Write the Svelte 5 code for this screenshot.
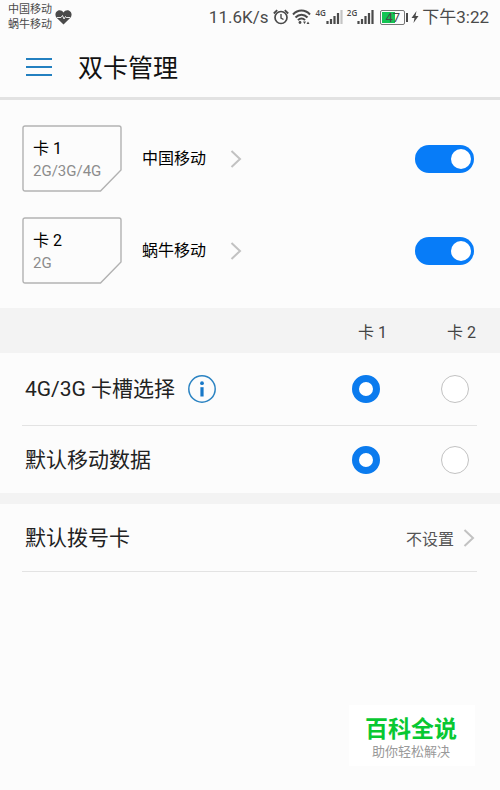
<script lang="ts">
  let sims = $state([
    { id: 1, name: '卡 1', network: '2G/3G/4G', carrier: '中国移动', enabled: true },
    { id: 2, name: '卡 2', network: '2G', carrier: '蜗牛移动', enabled: true },
  ]);

  let slotSim = $state(1);
  let dataSim = $state(1);
</script>

{#snippet chevron()}
  <svg class="chevron" viewBox="0 0 12 20" aria-hidden="true">
    <path d="M1.5 2 10 10 1.5 18" fill="none" stroke="#c2c2c2" stroke-width="2" />
  </svg>
{/snippet}

{#snippet signal(label: string, faded: boolean)}
  <span class="signal">
    <span class="signal-label">{label}</span>
    <svg width="17" height="16" viewBox="0 0 17 16" aria-hidden="true">
      <path d="M1.5 12v3M5 10v5M8.5 7v8M12 4v11" stroke="#4a4a4a" stroke-width="2.2" />
      <path d="M15.5 1v14" stroke={faded ? '#c4c4c4' : '#4a4a4a'} stroke-width="2.2" />
    </svg>
  </span>
{/snippet}

<div class="page">
  <div class="status">
    <div class="carriers">
      <span>中国移动</span>
      <span>蜗牛移动</span>
    </div>
    <svg class="heart" width="17" height="15" viewBox="0 0 17 15" aria-hidden="true">
      <path d="M8.5 14.5 1.6 7.8C-.4 5.4.2 1.8 2.8.7 5-.2 7.2.6 8.5 2.5 9.8.6 12-.2 14.2.7c2.6 1.1 3.2 4.7 1.2 7.1z" fill="#4a4a4a" />
      <path d="M2 7.5h4l1.5-2L9 9l1.500-2.500.8 1H15" fill="none" stroke="#fcfcfc" stroke-width="0.9" />
    </svg>
    <div class="status-right">
      <span>11.6K/s</span>
      <svg class="alarm" width="16" height="16" viewBox="0 0 16 16" fill="none" stroke="#4a4a4a" aria-hidden="true">
        <circle cx="8" cy="8.5" r="6" stroke-width="1.7" />
        <path d="M8 5v4l2.5 1.5" stroke-width="1.4" />
        <path d="M.8 4.5 4.2 1.2M15.2 4.5 11.8 1.2" stroke-width="1.8" />
      </svg>
      <svg class="wifi" width="19" height="16" viewBox="0 0 19 16" fill="none" stroke="#4a4a4a" aria-hidden="true">
        <path d="M1 5.5C6 .3 13 .3 18 5.5M3.5 8.5c3.5-3.8 8.5-3.8 12 0M6 11.2c2-2.2 5-2.2 7 0" stroke-width="2" />
        <circle cx="8" cy="13.5" r="1.4" fill="#4a4a4a" stroke="none" />
        <path d="m11 12.5 1.5 2.5 1.5-2.5zM14.500 15l1.500-2.500 1.500 2.500z" fill="#4a4a4a" stroke="none" />
      </svg>
      {@render signal('4G', true)}
      {@render signal('2G', false)}
      <span class="battery">47</span>
      <svg class="bolt" width="8" height="12" viewBox="0 0 8 12" aria-hidden="true">
        <path d="M5.5 0 .5 7h3l-1 5 5-7h-3z" fill="#4a4a4a" />
      </svg>
      <span>下午3:22</span>
    </div>
  </div>

  <header>
    <button class="menu" aria-label="菜单">
      <svg width="26" height="20" viewBox="0 0 26 20" aria-hidden="true">
        <path d="M0 2h26M0 10h26M0 18h26" stroke="#2380c0" stroke-width="2" />
      </svg>
    </button>
    <h1>双卡管理</h1>
  </header>

  <section class="sims">
    {#each sims as sim (sim.id)}
      <div class="sim-row">
        <div class="sim-card">
          <svg class="outline" viewBox="0 0 100 67" aria-hidden="true">
            <path d="M3 1h94a2 2 0 0 1 2 2v42L78.5 66H3a2 2 0 0 1-2-2V3a2 2 0 0 1 2-2z" fill="none" stroke="#b2b2b2" stroke-width="1.4" />
          </svg>
          <span class="sim-name">{sim.name}</span>
          <span class="sim-network">{sim.network}</span>
        </div>
        <button class="carrier">
          {sim.carrier}
          {@render chevron()}
        </button>
        <input class="toggle" type="checkbox" aria-label={sim.name} bind:checked={sim.enabled} />
      </div>
    {/each}
  </section>

  <div class="grid columns">
    <span></span>
    <span>卡 1</span>
    <span>卡 2</span>
  </div>

  <div class="grid row slot">
    <div class="label">
      4G/3G 卡槽选择
      <button class="info" aria-label="说明">
        <svg width="28" height="28" viewBox="0 0 28 28" aria-hidden="true">
          <circle cx="14" cy="14" r="13.2" fill="none" stroke="#2b83c2" stroke-width="1.5" />
          <circle cx="14" cy="8.2" r="1.9" fill="#1878c8" />
          <path d="M14 12.2v9.3" stroke="#1878c8" stroke-width="3.2" />
        </svg>
      </button>
    </div>
    {#each sims as sim (sim.id)}
      <input type="radio" name="slot" aria-label={sim.name} value={sim.id} bind:group={slotSim} />
    {/each}
  </div>

  <div class="grid row data">
    <div class="label">默认移动数据</div>
    {#each sims as sim (sim.id)}
      <input type="radio" name="data" aria-label={sim.name} value={sim.id} bind:group={dataSim} />
    {/each}
  </div>

  <div class="gap"></div>

  <button class="row dial">
    <span class="label">默认拨号卡</span>
    <span class="value">不设置</span>
    {@render chevron()}
  </button>

  <div class="brand">
    <strong>百科全说</strong>
    <span>助你轻松解决</span>
  </div>
</div>

<style>
  :global(body) {
    background: #fcfcfc;
  }

  .page {
    position: relative;
    box-sizing: border-box;
    min-height: 100vh;
    background: #fcfcfc;
    color: #222;
    font-family: Roboto, 'Noto Sans CJK SC', sans-serif;
  }

  button {
    display: flex;
    align-items: center;
    margin: 0;
    padding: 0;
    border: 0;
    background: none;
    color: inherit;
    font: inherit;
    cursor: pointer;
  }

  svg {
    display: block;
    flex: none;
  }

  .chevron {
    width: 12px;
    height: 20px;
  }

  /* status bar */
  .status {
    display: flex;
    align-items: center;
    height: 34px;
    padding: 0 11px 0 8px;
    color: #4a4a4a;
    font-size: 17px;
    white-space: nowrap;
  }

  .carriers {
    display: flex;
    flex-direction: column;
    font-size: 11px;
    line-height: 15px;
  }

  .heart {
    margin-left: 3px;
  }

  .status-right {
    display: flex;
    align-items: center;
    margin-left: auto;
    line-height: 24px;
  }

  .alarm {
    margin-left: 5px;
  }

  .wifi {
    margin: 0 4px 0 3px;
  }

  .signal {
    display: flex;
    align-items: flex-start;
    margin-right: 4px;
  }

  .signal-label {
    font-family: 'Open Sans', sans-serif;
    font-size: 8px;
    font-weight: 600;
    line-height: 8px;
  }

  .battery {
    box-sizing: border-box;
    position: relative;
    width: 25px;
    height: 15px;
    margin: 0 6px 0 2px;
    border: 1px solid #777;
    border-radius: 2px;
    background: linear-gradient(90deg, #14c454 60%, #fcfcfc 60%) content-box;
    padding: 1px;
    font-size: 13px;
    line-height: 12px;
    text-align: center;
  }

  .battery::after {
    content: '';
    position: absolute;
    top: 2px;
    right: -4px;
    width: 2px;
    height: 9px;
    background: #4a4a4a;
  }

  .bolt {
    margin-right: 3px;
  }

  /* title */
  header {
    display: flex;
    align-items: center;
    gap: 26px;
    box-sizing: border-box;
    height: 66px;
    padding: 2px 26px 0;
    border-bottom: 3px solid #e2e2e2;
  }

  h1 {
    margin: 0;
    padding-top: 4px;
    color: #111;
    font-size: 25px;
    font-weight: 400;
    line-height: 36px;
  }

  /* sim cards */
  .sims {
    display: flex;
    flex-direction: column;
    gap: 25px;
    padding: 25px 26px 24px 22px;
  }

  .sim-row {
    display: flex;
    align-items: center;
  }

  .sim-card {
    position: relative;
    display: flex;
    flex-direction: column;
    box-sizing: border-box;
    width: 100px;
    height: 67px;
    padding: 13px 0 0 11px;
    font-size: 16px;
    line-height: 22px;
  }

  .outline {
    position: absolute;
    inset: 0;
  }

  .sim-name {
    color: #000;
  }

  .sim-network {
    color: #8c8c8c;
    font-size: 15px;
  }

  .carrier {
    gap: 24px;
    margin-left: 20px;
    color: #000;
    font-size: 16px;
    line-height: 24px;
  }

  .toggle {
    appearance: none;
    display: flex;
    box-sizing: border-box;
    width: 59px;
    height: 28px;
    margin: 0 0 0 auto;
    padding: 4px 3px;
    border-radius: 14px;
    background: #c4c4c4;
    cursor: pointer;
  }

  .toggle::before {
    content: '';
    width: 20px;
    height: 20px;
    border-radius: 50%;
    background: #fff;
  }

  .toggle:checked {
    justify-content: flex-end;
    background: #077cf8;
  }

  /* settings */
  .grid {
    display: grid;
    grid-template-columns: 1fr 89px 36px;
    align-items: center;
  }

  .columns {
    height: 45px;
    padding: 0 17px 0 22px;
    background: #f3f3f3;
    color: #444;
    font-size: 16px;
    white-space: nowrap;
  }

  .row {
    box-sizing: border-box;
    margin: 0 23px 0 22px;
    padding-left: 3px;
  }

  .slot {
    height: 73px;
    border-bottom: 1px solid #e3e3e3;
  }

  .data {
    height: 67px;
  }

  .label {
    display: flex;
    align-items: center;
    gap: 13px;
    font-size: 21px;
    line-height: 30px;
    white-space: nowrap;
  }

  input[type='radio'] {
    appearance: none;
    box-sizing: border-box;
    width: 28px;
    height: 28px;
    margin: 0;
    border: 1px solid #c2c2c2;
    border-radius: 50%;
    background: #fff;
    cursor: pointer;
  }

  input[type='radio']:checked {
    border: 7px solid #0b7bee;
  }

  .gap {
    height: 11px;
    background: #f3f3f3;
  }

  .dial {
    display: flex;
    width: calc(100% - 45px);
    height: 68px;
    padding-right: 2px;
    border-bottom: 1px solid #e3e3e3;
  }

  .value {
    margin: 0 9px 0 auto;
    color: #555;
    font-size: 16px;
  }

  .brand {
    position: absolute;
    right: 25px;
    bottom: 24px;
    display: flex;
    flex-direction: column;
    align-items: center;
    box-sizing: border-box;
    padding: 10px 18px 7px 16px;
    background: #fff;
    color: #999;
    font-size: 13px;
    line-height: 14px;
  }

  .brand strong {
    color: #08c832;
    font-size: 23px;
    font-weight: 700;
    line-height: 30px;
  }
</style>
